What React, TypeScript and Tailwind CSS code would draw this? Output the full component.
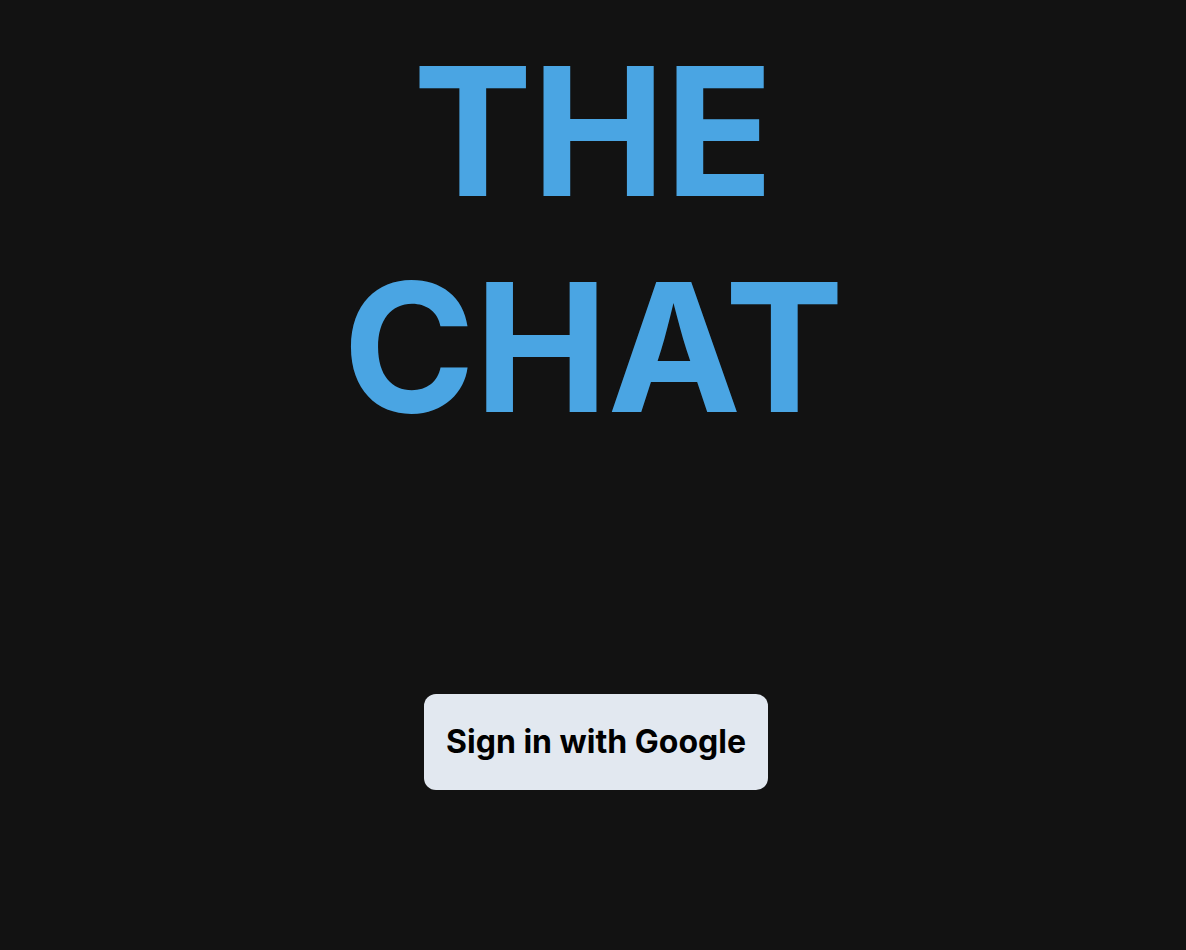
import React from "react";

export default function App() {
  return (
    <div className="min-h-[950px] w-full bg-[#121212] flex flex-col items-center" style={{ fontFamily: "Inter, 'Liberation Sans', sans-serif" }}>
      <h1 className="mt-[23px] text-[179px] leading-[216px] font-bold text-[#4aa5e3] text-center tracking-[-0.004em]">
        THE
        <br />
        CHAT
      </h1>
      <button className="mt-[239px] ml-[6px] bg-[#e2e8f0] text-black rounded-[12px] px-[22px] py-6 text-[32px] leading-[48px] font-bold">
        Sign in with Google
      </button>
    </div>
  );
}
